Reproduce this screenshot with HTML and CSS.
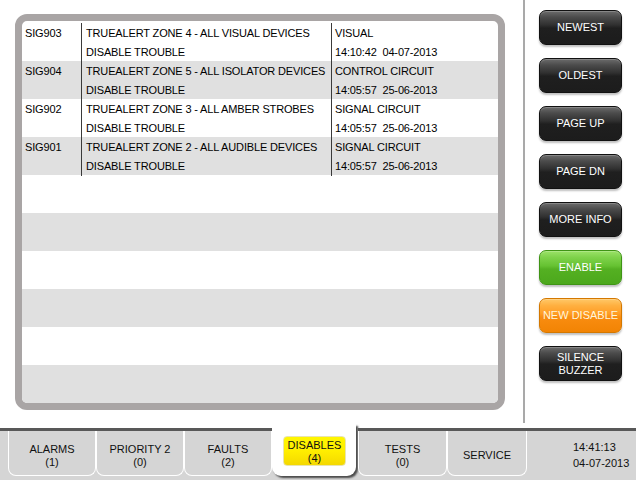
FILE: index.html
```html
<!DOCTYPE html>
<html>
<head>
<meta charset="utf-8">
<link rel="stylesheet" href="styles.css">
</head>
<body>
<div class="screen">
  <div class="main">
    <div class="panel">
      <div class="entry">
        <div class="c1"><div>SIG903</div></div>
        <div class="c2"><div>TRUEALERT ZONE 4 - ALL VISUAL DEVICES</div><div>DISABLE TROUBLE</div></div>
        <div class="c3"><div>VISUAL</div><div>14:10:42  04-07-2013</div></div>
      </div>
      <div class="entry">
        <div class="c1"><div>SIG904</div></div>
        <div class="c2"><div>TRUEALERT ZONE 5 - ALL ISOLATOR DEVICES</div><div>DISABLE TROUBLE</div></div>
        <div class="c3"><div>CONTROL CIRCUIT</div><div>14:05:57  25-06-2013</div></div>
      </div>
      <div class="entry">
        <div class="c1"><div>SIG902</div></div>
        <div class="c2"><div>TRUEALERT ZONE 3 - ALL AMBER STROBES</div><div>DISABLE TROUBLE</div></div>
        <div class="c3"><div>SIGNAL CIRCUIT</div><div>14:05:57  25-06-2013</div></div>
      </div>
      <div class="entry">
        <div class="c1"><div>SIG901</div></div>
        <div class="c2"><div>TRUEALERT ZONE 2 - ALL AUDIBLE DEVICES</div><div>DISABLE TROUBLE</div></div>
        <div class="c3"><div>SIGNAL CIRCUIT</div><div>14:05:57  25-06-2013</div></div>
      </div>
      <div class="entry empty"></div>
      <div class="entry empty"></div>
      <div class="entry empty"></div>
      <div class="entry empty"></div>
      <div class="entry empty"></div>
      <div class="entry empty"></div>
    </div>
    <div class="side">
      <div class="btn">NEWEST</div>
      <div class="btn">OLDEST</div>
      <div class="btn">PAGE UP</div>
      <div class="btn">PAGE DN</div>
      <div class="btn">MORE INFO</div>
      <div class="btn green">ENABLE</div>
      <div class="btn orange">NEW DISABLE</div>
      <div class="btn two">SILENCE<br>BUZZER</div>
    </div>
  </div>
  <div class="tabbar">
    <div class="lead"></div>
    <div class="tab w88"><div class="tab-in">ALARMS<br>(1)</div></div>
    <div class="tab w88"><div class="tab-in">PRIORITY 2<br>(0)</div></div>
    <div class="tab w88"><div class="tab-in">FAULTS<br>(2)</div></div>
    <div class="tab-active"><div class="yellow">DISABLES<br>(4)</div></div>
    <div class="tab w89"><div class="tab-in">TESTS<br>(0)</div></div>
    <div class="tab w80"><div class="tab-in">SERVICE</div></div>
    <div class="clock"><div>14:41:13</div><div>04-07-2013</div></div>
  </div>
</div>
</body>
</html>
```

FILE: styles.css
```css
* { box-sizing: border-box; }
html, body { margin: 0; padding: 0; background: #fff; }
body {
  font-family: "Liberation Sans", Arial, sans-serif;
  font-size: 11px;
  color: #000;
}
.screen { width: 636px; height: 480px; overflow: hidden; display: flex; flex-direction: column; }
.main { height: 428px; display: flex; align-items: flex-start; }
.panel {
  margin: 14px 0 0 15px;
  width: 490px;
  height: 396px;
  border: 7px solid #a9a5a5;
  border-radius: 12px;
  padding-top: 2px;
  overflow: hidden;
  background: #fff;
}
.entry {
  height: 38px;
  display: grid;
  grid-template-columns: 59px 250px 1fr;
  line-height: 19px;
  padding-top: 1px;
  white-space: pre;
  letter-spacing: -0.15px;
}
.entry:nth-child(even) { background: #e0e0e0; }
.entry.empty { display: block; }
.c1 { padding-left: 3px; }
.c2 { padding-left: 4px; border-left: 1px solid #3a3a3a; margin-top: -1px; padding-top: 1px; }
.c3 { padding-left: 3px; border-left: 1px solid #3a3a3a; margin-top: -1px; padding-top: 1px; }
.side {
  margin-left: 18px;
  height: 423px;
  border-left: 2px solid #a9a9a9;
  padding: 10px 0 0 14px;
  display: flex;
  flex-direction: column;
  gap: 13px;
}
.btn {
  width: 83px;
  height: 35px;
  border-radius: 7px;
  border: 1px solid #111;
  background: linear-gradient(to bottom, #6c6c6c 0, #4c4c4c 18%, #303030 42%, #1f1f1f 52%, #1c1c1c 100%);
  box-shadow: 0 2px 2px rgba(0,0,0,0.25), inset 0 1px 0 rgba(255,255,255,0.2);
  color: #fff;
  display: flex;
  align-items: center;
  justify-content: center;
  text-align: center;
  line-height: 13px;
}
.btn.green {
  border-color: #3f9415;
  background: linear-gradient(to bottom, #9be268 0, #7ed24a 20%, #66c232 45%, #54b022 55%, #4ca81c 100%);
}
.btn.orange {
  border-color: #d47800;
  background: linear-gradient(to bottom, #ffc868 0, #ffb040 20%, #ff9c24 45%, #f98c10 55%, #f28404 100%);
  color: #fff6dc;
}
.tabbar {
  height: 52px;
  display: flex;
  background: #d5d5d5;
}
.lead { width: 8px; border-top: 3px solid #585858; }
.tab { border-top: 3px solid #585858; padding-bottom: 4px; }
.w88 { width: 88px; }
.w89 { width: 89px; }
.w80 { width: 80px; }
.tab-in {
  height: 100%;
  border: 1px solid #fff;
  border-top: 0;
  border-radius: 0 0 8px 8px;
  display: flex;
  align-items: center;
  justify-content: center;
  text-align: center;
  line-height: 13px;
  padding-top: 5px;
  color: #111;
}
.tab-active {
  width: 84px;
  margin-right: 2px;
  margin-top: -4px;
  height: 52px;
  background: #fff;
  border-radius: 0 0 9px 9px;
  box-shadow: 2px 2px 2px #4a4a4a;
  padding: 12px 0 0 11px;
}
.yellow {
  width: 63px;
  height: 30px;
  border: 1px solid #e8e4b0;
  border-radius: 4px;
  background: linear-gradient(to bottom, #fff600 0, #ffee00 50%, #f4d800 100%);
  display: flex;
  align-items: center;
  justify-content: center;
  text-align: center;
  line-height: 13px;
  padding-top: 1px;
  color: #111;
}
.clock {
  flex: 1;
  border-top: 3px solid #585858;
  padding: 8px 0 0 46px;
  line-height: 16px;
  color: #111;
}
```
